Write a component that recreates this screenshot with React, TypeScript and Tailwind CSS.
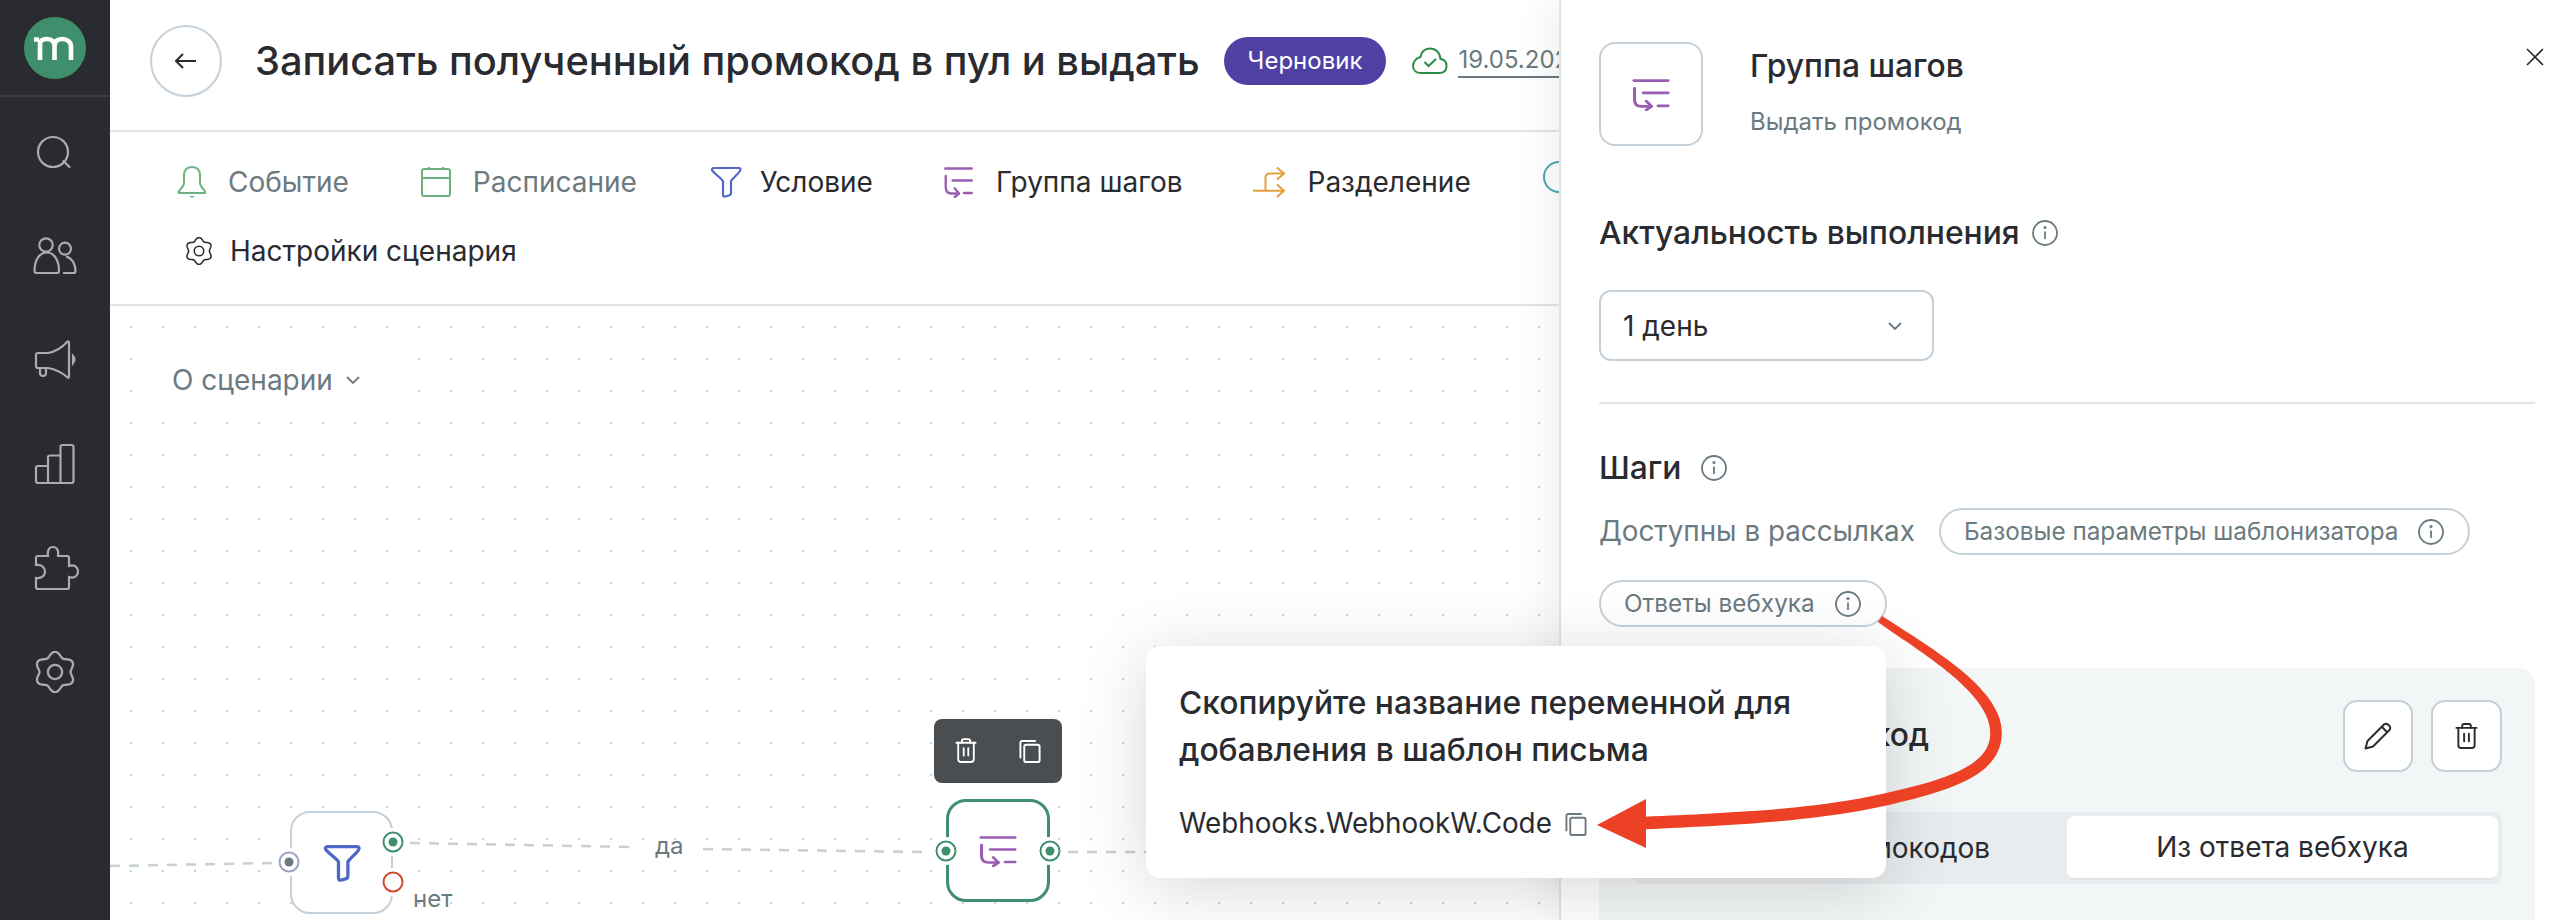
const gearPath = (() => {
  const pts: string[] = [];
  for (let i = 0; i < 120; i++) {
    const a = (i / 120) * Math.PI * 2;
    const r = 17 + 2.2 * Math.cos(6 * a);
    pts.push(`${(r * Math.sin(a)).toFixed(2)} ${(-r * Math.cos(a)).toFixed(2)}`);
  }
  return `M${pts.join("L")}Z`;
})();

// red annotation arrow: three curves sampled, then offset by a width that grows along the way
const arrowPath = (() => {
  const curves = [
    [1880, 619, 1925, 650, 1996, 690, 1996, 733],
    [1996, 733, 1996, 770, 1950, 785, 1883, 800],
    [1883, 800, 1810, 816, 1730, 819, 1645, 823],
  ];
  const left: string[] = [];
  const right: string[] = [];
  const n = 30;
  curves.forEach((c, ci) => {
    for (let i = 0; i <= n; i++) {
      const t = i / n;
      const u = 1 - t;
      const x = u * u * u * c[0] + 3 * u * u * t * c[2] + 3 * u * t * t * c[4] + t * t * t * c[6];
      const y = u * u * u * c[1] + 3 * u * u * t * c[3] + 3 * u * t * t * c[5] + t * t * t * c[7];
      let dx = 3 * u * u * (c[2] - c[0]) + 6 * u * t * (c[4] - c[2]) + 3 * t * t * (c[6] - c[4]);
      let dy = 3 * u * u * (c[3] - c[1]) + 6 * u * t * (c[5] - c[3]) + 3 * t * t * (c[7] - c[5]);
      const len = Math.hypot(dx, dy) || 1;
      dx /= len;
      dy /= len;
      const s = (ci + t) / 3;
      const w = s < 0.3 ? 7.5 + (s / 0.3) * 4 : 11.5 + (s - 0.3) * 1.5;
      left.push(`${(x - (dy * w) / 2).toFixed(1)} ${(y + (dx * w) / 2).toFixed(1)}`);
      right.unshift(`${(x + (dy * w) / 2).toFixed(1)} ${(y - (dx * w) / 2).toFixed(1)}`);
    }
  });
  return `M${left.concat(right).join("L")}Z`;
})();

function Gear({ className }: { className: string }) {
  return (
    <svg viewBox="-20 -20 40 40" fill="none" stroke="currentColor" strokeWidth="2.2" className={className}>
      <path d={gearPath} strokeLinejoin="round" />
      <circle r="6.8" />
    </svg>
  );
}

function StepsIcon({ className }: { className: string }) {
  return (
    <svg viewBox="945 167 34 32" preserveAspectRatio="none" fill="none" stroke="#9a5db5" strokeWidth="2.6" strokeLinecap="round" strokeLinejoin="round" className={className}>
      <path d="M947.5 169.5H976.5" />
      <path d="M955.5 181.5H976.5" />
      <path d="M968 194H976.5" />
      <path d="M948 177V188Q948 194.5 954 194.5H962" />
      <path d="M958 189.5L962.5 194.5L958 198" />
    </svg>
  );
}

function CopyIcon({ className }: { className: string }) {
  return (
    <svg viewBox="0 0 22 24" fill="none" stroke="currentColor" strokeWidth="2" className={className}>
      <rect x="5" y="5" width="16" height="18" rx="2" />
      <path d="M1 19V3Q1 1 3 1H17" />
    </svg>
  );
}

function TrashIcon({ className }: { className: string }) {
  return (
    <svg viewBox="0 0 24 28" fill="none" stroke="currentColor" strokeWidth="2" strokeLinecap="round" className={className}>
      <path d="M1.5 5H22.5" />
      <path d="M7.5 5V3Q7.5 1 9.5 1H14.5Q16.5 1 16.5 3V5" />
      <path d="M3.5 5V23Q3.5 26 6.5 26H17.5Q20.5 26 20.5 23V5" />
      <path d="M9.5 11V19M14.5 11V19" />
    </svg>
  );
}

function Info() {
  return (
    <svg viewBox="0 0 26 26" fill="none" stroke="#6b7a80" strokeWidth="1.8" className="h-[26px] w-[26px] shrink-0">
      <circle cx="13" cy="13" r="12" />
      <path d="M13 11.5V19" />
      <circle cx="13" cy="7.5" r="0.7" fill="#6b7a80" />
    </svg>
  );
}

function Port({ x, y, color, dot }: { x: number; y: number; color: string; dot: string }) {
  return (
    <svg viewBox="0 0 28 28" className="absolute h-[28px] w-[28px]" style={{ left: x - 14, top: y - 14 }}>
      <circle cx="14" cy="14" r="14" fill="#fff" />
      <circle cx="14" cy="14" r="9.5" fill="#fff" stroke={color} strokeWidth="2" />
      {dot !== "none" && <circle cx="14" cy="14" r="4.5" fill={dot} />}
    </svg>
  );
}

function Pill({ label }: { label: string }) {
  return (
    <div className="flex h-[47px] items-center gap-[20px] rounded-full border-2 border-[#c5d0d8] pl-[23px] pr-[24px] text-[24.3px] text-[#6b7a80]">
      {label}
      <Info />
    </div>
  );
}

function ToolItem({ icon, label, muted }: { icon: React.ReactNode; label: string; muted?: boolean }) {
  return (
    <div className={`flex shrink-0 items-center gap-[22px] text-[28px] ${muted ? "text-[#6b7a80]" : "text-[#2a2b30]"}`}>
      {icon}
      {label}
    </div>
  );
}

export default function App() {
  return (
    <div className="relative flex h-[920px] w-[2574px] overflow-hidden bg-white font-[Inter,sans-serif] text-[#2a2b30]">
      {/* sidebar */}
      <aside className="flex h-full w-[110px] shrink-0 flex-col bg-[#2a2b30] text-[#a9abae]">
        <div className="flex h-[97px] shrink-0 items-center justify-center border-b-2 border-[#3d3e43]">
          <svg viewBox="23 10 62 62" className="h-[62px] w-[62px]">
            <circle cx="54" cy="41" r="31" fill="#3f8f6f" />
            <path d="M33 32.5H38M39 53V37C39 33 43 32 46 32C51 32 53.5 35 53.5 39V53M53.5 39C53.5 35 56 32 61 32C66 32 70 35 70 40V53" fill="none" stroke="#fff" strokeWidth="4.6" />
          </svg>
        </div>
        <nav className="flex flex-col pt-[3px]">
          <div className="flex h-[104px] items-center justify-center">
            <svg viewBox="30 129 48 48" fill="none" stroke="currentColor" strokeWidth="2.2" className="h-[48px] w-[48px]">
              <circle cx="52" cy="153" r="15" />
              <path d="M62.5 162L68.5 168" strokeLinecap="round" />
            </svg>
          </div>
          <div className="flex h-[104px] items-center justify-center">
            <svg viewBox="30 234 48 48" fill="none" stroke="currentColor" strokeWidth="2.2" className="h-[48px] w-[48px]">
              <circle cx="45" cy="247" r="6.7" />
              <path d="M36 275H56Q58 275 58 273C58 262 53 254.5 45.8 254.5C38.5 254.5 33.5 262 33.5 273Q33.5 275 36 275Z" />
              <circle cx="64" cy="250.7" r="6" />
              <path d="M62 275H72.5Q74.5 275 74.5 273C74.5 266 71 260 65 258.5" />
            </svg>
          </div>
          <div className="flex h-[104px] items-center justify-center">
            <svg viewBox="30 338 48 48" fill="none" stroke="currentColor" strokeWidth="2.2" className="h-[48px] w-[48px]">
              <path d="M37 355H47Q58 353 66 344Q68 342.5 68 345V378Q68 381 66 379Q58 372 47 370H37Q35 370 35 368V357Q35 355 37 355Z" />
              <path d="M39 370V375Q39 378 42 378Q45 378 45 375V371" />
              <path d="M72 358Q75 361 72 365Z" fill="currentColor" />
            </svg>
          </div>
          <div className="flex h-[104px] items-center justify-center">
            <svg viewBox="30 442 48 48" fill="none" stroke="currentColor" strokeWidth="2.2" className="h-[48px] w-[48px]">
              <path d="M37 485Q35 485 35 483V470Q35 468 37 468H47V459Q47 457.5 49 457.5H59.5V449Q59.5 447 61.5 447H70.5Q72.5 447 72.5 449V483Q72.5 485 70.5 485ZM47 468V485M59.5 457.5V485" />
            </svg>
          </div>
          <div className="flex h-[104px] items-center justify-center">
            <svg viewBox="30 544 48 48" fill="none" stroke="currentColor" strokeWidth="2.2" className="h-[48px] w-[48px]">
              <path d="M37 556H47C46 549 49 547 52 547C55 547 58 549 57 556H66Q68 556 68 558V566C74 564 77 568 77 571.5C77 575 74 579 68 577V587Q68 589 66 589H37Q35 589 35 587V578C41 579 44 575 44 571.5C44 568 41 564 35 565V558Q35 556 37 556Z" />
            </svg>
          </div>
          <div className="flex h-[104px] items-center justify-center">
            <Gear className="h-[42px] w-[42px]" />
          </div>
        </nav>
      </aside>

      {/* main */}
      <main className="flex h-full w-[1449px] shrink-0 flex-col overflow-hidden">
        <header className="flex h-[132px] shrink-0 items-center border-b-2 border-[#dfe5e9] pb-[8px] pl-[40px]">
          <button className="flex h-[72px] w-[72px] shrink-0 items-center justify-center rounded-full border-2 border-[#c5d0d8]">
            <svg viewBox="0 0 22 16" fill="none" stroke="#2a2b30" strokeWidth="2" className="h-[16px] w-[22px]">
              <path d="M1 8H21M8 1L1 8L8 15" />
            </svg>
          </button>
          <h1 className="ml-[33px] shrink-0 whitespace-nowrap text-[39.8px] font-medium">Записать полученный промокод в пул и выдать</h1>
          <span className="ml-[24px] flex h-[48px] shrink-0 items-center rounded-full bg-[#4e41a3] px-[24px] text-[24px] text-white">Черновик</span>
          <svg viewBox="1411 47 38 30" fill="none" stroke="#2e8b46" strokeWidth="2" className="ml-[25px] h-[30px] w-[38px] shrink-0">
            <path d="M1421 74H1439C1444 74 1446.5 71 1446.5 67C1446.5 63 1444 60.5 1440.5 60C1440 53.5 1435.5 49.5 1430 49.5C1424.5 49.5 1421 53.5 1420.5 58C1416 59 1413 63 1413 67C1413 71 1416 74 1421 74Z" />
            <path d="M1424.5 63L1428.5 67L1436 60" />
          </svg>
          <span className="ml-[9px] shrink-0 whitespace-nowrap border-b-2 border-[#6b7a80] text-[24px] leading-[32px] text-[#6b7a80]">19.05.2023</span>
        </header>

        <div className="flex h-[174px] shrink-0 flex-col border-b-2 border-[#dfe5e9]">
          <div className="flex gap-[72px] pl-[66px] pt-[29px]">
            <ToolItem
              muted
              label="Событие"
              icon={
                <svg viewBox="176 165 30 34" fill="none" stroke="#6db27e" strokeWidth="2" className="h-[34px] w-[30px]">
                  <path d="M192 167C186 167 184 171.5 184 176V183C184 187 180 189 178.5 192Q178 193 179.5 193H204.5Q206 193 205.5 192C204 189 200 187 200 183V176C200 171.5 198 167 192 167Z" />
                  <path d="M189 196H195L192 198Z" fill="#6db27e" stroke="none" />
                </svg>
              }
            />
            <ToolItem
              muted
              label="Расписание"
              icon={
                <svg viewBox="0 0 30 30" fill="none" stroke="#6db27e" strokeWidth="2" className="h-[30px] w-[30px]">
                  <rect x="1" y="2" width="28" height="27" rx="2" />
                  <path d="M1 11H29M8 0V2M22 0V2" />
                </svg>
              }
            />
            <ToolItem
              label="Условие"
              icon={
                <svg viewBox="709 165 33 34" fill="none" stroke="#4f67c7" strokeWidth="2.2" className="-mr-[4px] h-[34px] w-[33px]">
                  <path d="M713.5 168H738.5Q741.5 168 740 171C738 174 733 178 731 181V193Q731 195 729 195.5L725 196.5Q723 197 723 194.5V181C721 178 715 174 712.5 171Q711 168.5 713.5 168Z" />
                </svg>
              }
            />
            <ToolItem label="Группа шагов" icon={<StepsIcon className="-ml-[2px] h-[32px] w-[31px]" />} />
            <ToolItem
              label="Разделение"
              icon={
                <svg viewBox="1254 166 34 32" fill="none" stroke="#e3a13e" strokeWidth="2" className="-ml-[3px] h-[32px] w-[34px]">
                  <path d="M1255 190.7H1286M1279 184.5L1286 190.7L1279 197M1267.5 190.7V178Q1267.5 173.5 1272 173.5H1286M1279 167.5L1286 173.5L1279 179.5" />
                </svg>
              }
            />
            <svg viewBox="0 0 32 32" fill="none" stroke="#4aa8ad" strokeWidth="2" className="h-[32px] w-[32px] shrink-0">
              <circle cx="16" cy="16" r="15" />
            </svg>
          </div>
          <div className="mt-[27px] flex items-center gap-[17px] pl-[75px] text-[28px]">
            <Gear className="h-[28px] w-[28px]" />
            Настройки сценария
          </div>
        </div>

        {/* canvas */}
        <div className="relative flex-1 bg-[radial-gradient(circle,#c9d0d4_1px,transparent_1.3px)] bg-[length:32px_32px] bg-[position:5px_5px]">
          <div className="absolute left-[40px] top-[44px] flex h-[60px] w-[250px] items-center gap-[13px] bg-white pl-[22px] text-[28px] text-[#6b7a80]">
            О сценарии
            <svg viewBox="0 0 14 8" fill="none" stroke="#6b7a80" strokeWidth="1.8" className="h-[8px] w-[14px]">
              <path d="M1 1L7 7L13 1" />
            </svg>
          </div>

          <svg viewBox="110 306 1449 614" className="absolute inset-0 h-full w-full" fill="none" stroke="#c5d0d8" strokeWidth="2.5" strokeDasharray="10 9">
            <path d="M110 866L272 863" />
            <path d="M410 843L635 847" />
            <path d="M703 849L930 852" />
            <path d="M1068 852H1146" />
          </svg>

          <div className="absolute left-[180px] top-[505px] flex h-[103px] w-[103px] items-center justify-center rounded-[20px] border-2 border-[#c5d0d8] bg-white">
            <svg viewBox="709 165 34 34" fill="none" stroke="#4f67c7" strokeWidth="2.8" className="h-[40px] w-[40px]">
              <path d="M713.5 168H738.5Q741.5 168 740 171C738 174 733 178 731 181V193Q731 195 729 195.5L725 196.5Q723 197 723 194.5V181C721 178 715 174 712.5 171Q711 168.5 713.5 168Z" />
            </svg>
          </div>
          <Port x={179} y={556} color="#9da3c3" dot="#6b7a80" />
          <Port x={283} y={536} color="#3f8f6f" dot="#3f8f6f" />
          <Port x={283} y={576} color="#d0492e" dot="none" />
          <span className="absolute left-[303px] top-[578px] text-[24px] leading-[30px] text-[#6b7a80]">нет</span>
          <span className="absolute left-[545px] top-[525px] text-[24px] leading-[30px] text-[#6b7a80]">да</span>

          <div className="absolute left-[824px] top-[413px] flex h-[64px] w-[128px] items-center justify-center gap-[42px] rounded-[8px] bg-[#4b4e50] text-white">
            <TrashIcon className="h-[26px] w-[22px]" />
            <CopyIcon className="h-[23px] w-[22px]" />
          </div>
          <div className="absolute left-[836px] top-[493px] flex h-[103px] w-[104px] items-center justify-center rounded-[20px] border-[3px] border-[#3f8f6f] bg-white">
            <StepsIcon className="h-[32px] w-[40px]" />
          </div>
          <Port x={836} y={545} color="#3f8f6f" dot="#3f8f6f" />
          <Port x={940} y={545} color="#3f8f6f" dot="#3f8f6f" />
        </div>
      </main>

      {/* side panel */}
      <section className="z-10 flex h-full w-[1015px] shrink-0 flex-col overflow-hidden border-l-2 border-[#dfe5e9] bg-white pl-[38px] pr-[39px] pt-[42px] shadow-[-8px_0_40px_rgba(0,0,0,0.07)]">
        <div className="flex justify-between">
          <div className="flex">
            <div className="flex h-[104px] w-[104px] items-center justify-center rounded-[16px] border-2 border-[#c5d0d8]">
              <StepsIcon className="h-[33px] w-[40px]" />
            </div>
            <div className="ml-[47px]">
              <div className="mt-[4px] text-[31.8px] font-medium leading-[40px]">Группа шагов</div>
              <div className="mt-[20px] text-[24px] leading-[32px] text-[#6b7a80]">Выдать промокод</div>
            </div>
          </div>
          <svg viewBox="0 0 18 18" fill="none" stroke="#2a2b30" strokeWidth="1.6" className="mr-[-9px] mt-[6px] h-[18px] w-[18px]">
            <path d="M1 1L17 17M17 1L1 17" />
          </svg>
        </div>

        <div className="mt-[67px] flex h-[40px] items-center gap-[12px] text-[31.8px] font-medium">
          Актуальность выполнения
          <Info />
        </div>
        <div className="mt-[37px] flex h-[71px] w-[335px] items-center justify-between rounded-[12px] border-2 border-[#c5d0d8] pl-[22px] pr-[30px] text-[28px]">
          1 день
          <svg viewBox="0 0 14 8" fill="none" stroke="#6b7a80" strokeWidth="1.8" className="h-[8px] w-[14px]">
            <path d="M1 1L7 7L13 1" />
          </svg>
        </div>
        <div className="mt-[41px] h-[2px] shrink-0 bg-[#dfe5e9]" />

        <div className="mt-[44px] flex h-[40px] items-center gap-[20px] text-[31.8px] font-medium">
          Шаги
          <Info />
        </div>
        <div className="mt-[20px] flex flex-wrap items-center gap-x-[24px] gap-y-[25px]">
          <span className="text-[27.8px] text-[#6b7a80]">Доступны в рассылках</span>
          <Pill label="Базовые параметры шаблонизатора" />
          <Pill label="Ответы вебхука" />
        </div>

        <div className="mt-[41px] flex-1 rounded-t-[16px] bg-[#f3f6f7] px-[33px] pt-[32px]">
          <div className="flex h-[72px] items-center justify-between">
            <div className="-mt-[2px] ml-[13px] text-[31.8px] font-medium">Выдать промокод</div>
            <div className="flex gap-[18px]">
              <button className="flex h-[72px] w-[70px] items-center justify-center rounded-[14px] border-2 border-[#c5d0d8] bg-white text-[#2a2b30]">
                <svg viewBox="0 0 28 28" fill="none" stroke="currentColor" strokeWidth="2" strokeLinejoin="round" className="h-[28px] w-[28px]">
                  <path d="M1.5 26.5L3.5 19L20 2.5Q22 1 24 2.5L25.5 4Q27 6 25.5 8L9 24.5Z" />
                  <path d="M18 5L23 10" />
                </svg>
              </button>
              <button className="flex h-[72px] w-[71px] items-center justify-center rounded-[14px] border-2 border-[#c5d0d8] bg-white text-[#2a2b30]">
                <TrashIcon className="h-[27px] w-[23px]" />
              </button>
            </div>
          </div>
          <div className="mt-[40px] grid h-[72px] grid-cols-2 rounded-[10px] bg-[#e9ecee] p-[4px] text-[28px]">
            <div className="flex items-center justify-center pr-[6px] text-[#2a2b30]">Из пула промокодов</div>
            <div className="flex items-center justify-center rounded-[8px] border-b-2 border-[#dfe5e9] bg-white">Из ответа вебхука</div>
          </div>
        </div>
      </section>

      {/* popover */}
      <div className="absolute left-[1146px] top-[646px] z-20 h-[232px] w-[740px] rounded-[14px] bg-white pl-[33px] pt-[33px] shadow-[0_10px_70px_rgba(0,0,0,0.16)]">
        <p className="text-[31.8px] font-medium leading-[47px]">
          Скопируйте название переменной для
          <br />
          добавления в шаблон письма
        </p>
        <div className="mt-[31px] flex h-[40px] items-center gap-[13px] text-[27.8px]">
          Webhooks.WebhookW.Code
          <CopyIcon className="h-[23px] w-[22px] text-[#6b7a80]" />
        </div>
      </div>

      {/* annotation arrow */}
      <svg viewBox="0 0 2574 920" className="pointer-events-none absolute inset-0 z-30 h-full w-full" fill="#ec4124">
        <path d={arrowPath} />
        <path d="M1597 825L1646 799V848Z" />
      </svg>
    </div>
  );
}
